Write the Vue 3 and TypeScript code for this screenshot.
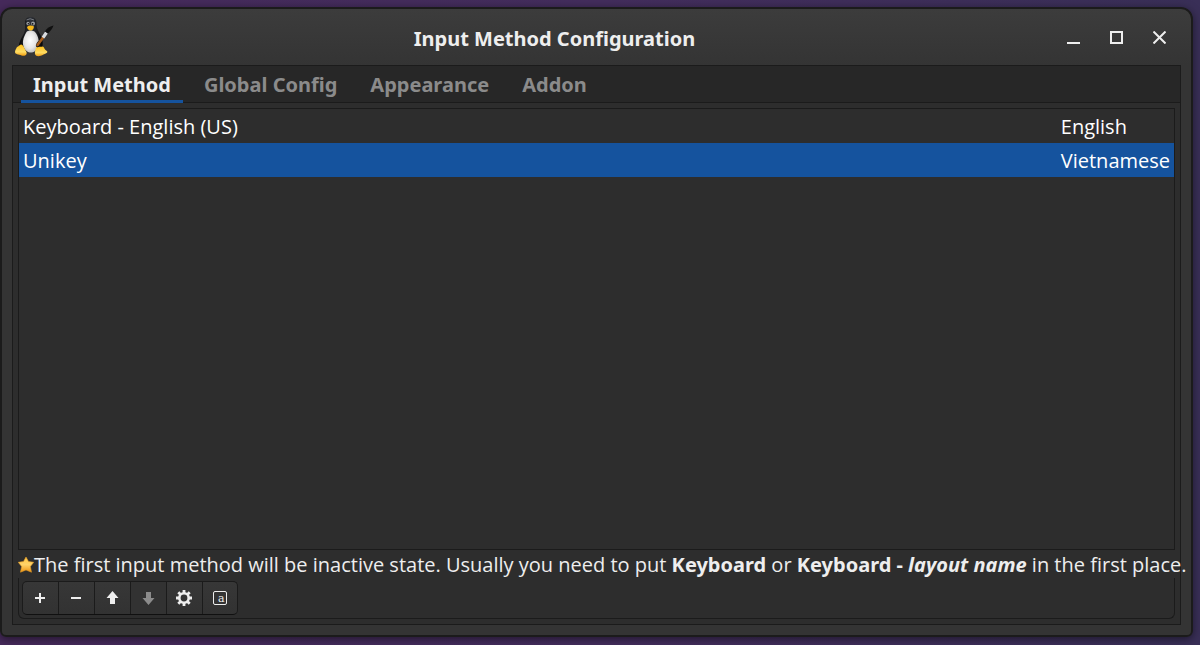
<script setup lang="ts">
import { ref } from 'vue'

interface InputMethod {
  name: string
  language: string
}

const tabs: string[] = ['Input Method', 'Global Config', 'Appearance', 'Addon']
const activeTab = ref(0)

const methods: InputMethod[] = [
  { name: 'Keyboard - English (US)', language: 'English' },
  { name: 'Unikey', language: 'Vietnamese' },
]
const selected = ref(1)
</script>

<template>
  <main class="window">
    <header class="titlebar">
      <svg class="app-icon" viewBox="-2 0 45 44" aria-hidden="true">
        <defs>
          <radialGradient id="belly" cx="45%" cy="45%" r="60%">
            <stop offset="0" stop-color="#ffffff" />
            <stop offset="0.6" stop-color="#e6e6e6" />
            <stop offset="1" stop-color="#b9b9b9" />
          </radialGradient>
          <linearGradient id="foot" x1="0" y1="0" x2="0" y2="1">
            <stop offset="0" stop-color="#ffc21c" />
            <stop offset="0.65" stop-color="#ffdc63" />
            <stop offset="1" stop-color="#ef9c10" />
          </linearGradient>
          <linearGradient id="coat" x1="0" y1="0" x2="1" y2="0">
            <stop offset="0" stop-color="#050505" />
            <stop offset="0.5" stop-color="#30333a" />
            <stop offset="1" stop-color="#050505" />
          </linearGradient>
        </defs>
        <path d="M11 8C11 4 13 2 16.500 2C20.500 2 22.500 4.500 22.500 9C22.500 14 25 17 27 21C29 25 29.500 31 27 36L18 38L7 36C3.500 33 5 28 7 24C9 20 11.500 17 11 12Z" fill="url(#coat)" />
        <path d="M12.500 17C14 15 19 15 21 17C24.500 21 25.500 26 24 31.500C22.500 37 18 38.500 14 37C10 35 8.500 30 9 26C9.500 22 11 20 12.500 17Z" fill="url(#belly)" />
        <path d="M12.500 5Q16 2.500 20 5" stroke="#777b82" stroke-width="1" fill="none" />
        <ellipse cx="14" cy="8.500" rx="1.600" ry="1.800" fill="#9c9fa3" />
        <ellipse cx="19" cy="8.500" rx="2" ry="2" fill="#9c9fa3" />
        <circle cx="14.400" cy="8.800" r=".8" fill="#151515" />
        <circle cx="18.600" cy="8.800" r=".9" fill="#151515" />
        <path d="M13 12Q16 9.500 20 11.500Q19.500 15.500 16.500 15.500Q13.500 15 13 12Z" fill="#f7b91b" />
        <path d="M3 32C4.500 32 5.500 29.500 7 29.500C9.500 30 10 33 12 36C14 40 11 41.500 7.500 40.500C4.500 39 1 39.500 1 37C1 35 2.200 34 3 32Z" fill="url(#foot)" />
        <path d="M22 33C23 31 27 32 28.500 31.500C30.500 32 30 34 31.500 35C35 37 33 38 29.500 39.500C26 41.500 22 42 21 39C20.500 37 21.500 35 22 33Z" fill="url(#foot)" />
        <ellipse cx="24.500" cy="29" rx="2" ry="3.500" fill="#121212" transform="rotate(30 24.500 29)" />
        <path d="M23.500 30L29.500 22" stroke="#a95e1c" stroke-width="2.600" stroke-linecap="round" />
        <path d="M29 22.600L32.500 17.500" stroke="#d9dce0" stroke-width="3.200" />
        <path d="M31 16.500Q33 12 39.500 10.500Q38.500 14 34 18.500Z" fill="#101010" />
      </svg>
      <h1>Input Method Configuration</h1>
      <div class="controls">
        <button type="button" aria-label="Minimize">
          <svg viewBox="0 0 13 13" shape-rendering="crispEdges"><path d="M0 11h13v2H0z" fill="#eee" /></svg>
        </button>
        <button type="button" aria-label="Maximize">
          <svg viewBox="0 0 13 13" shape-rendering="crispEdges"><path d="M1 1h11v11H1z" fill="none" stroke="#eee" stroke-width="2" /></svg>
        </button>
        <button type="button" aria-label="Close">
          <svg viewBox="0 0 13 13"><path d="M.5.5l12 12M12.500.5l-12 12" fill="none" stroke="#eee" stroke-width="2" /></svg>
        </button>
      </div>
    </header>

    <section class="notebook">
      <nav class="tabs" role="tablist">
        <button
          v-for="(tab, i) in tabs"
          :key="tab"
          type="button"
          role="tab"
          :aria-selected="i === activeTab"
          :class="{ active: i === activeTab }"
          @click="activeTab = i"
        >{{ tab }}</button>
      </nav>

      <div class="page">
        <div class="list">
          <table>
            <tbody>
              <tr
                v-for="(m, i) in methods"
                :key="m.name"
                :class="{ selected: i === selected }"
                @click="selected = i"
              >
                <td>{{ m.name }}</td>
                <td class="language">{{ m.language }}</td>
              </tr>
            </tbody>
          </table>
        </div>

        <p class="note">
          <svg class="star" viewBox="0 0 16 16" aria-hidden="true">
            <defs>
              <linearGradient id="gold" x1="0" y1="0" x2="0" y2="1">
                <stop offset="0" stop-color="#ffc640" />
                <stop offset="0.5" stop-color="#ffd36a" />
                <stop offset="1" stop-color="#ee9412" />
              </linearGradient>
            </defs>
            <path d="M8 0L10.500 4.500L15.700 5.300L12.400 9.500L13.500 15.200L8 13L2.500 15.200L3.600 9.500L.3 5.300L5.500 4.500Z" fill="url(#gold)" stroke="#e09a28" stroke-width=".6" stroke-linejoin="round" />
          </svg>
          <span>The first input method will be inactive state. Usually you need to put <b>Keyboard</b> or <b>Keyboard - <i>layout name</i></b> in the first place.</span>
        </p>

        <div class="toolbar">
          <div class="group">
            <button type="button" aria-label="Add">
              <svg viewBox="0 0 16 16" shape-rendering="crispEdges"><path d="M7 3h2v4h4v2H9v4H7V9H3V7h4z" fill="#eee" /></svg>
            </button>
            <button type="button" aria-label="Remove">
              <svg viewBox="0 0 16 16" shape-rendering="crispEdges"><path d="M3 7h10v2H3z" fill="#eee" /></svg>
            </button>
            <button type="button" aria-label="Move up">
              <svg viewBox="0 0 16 16"><path d="M8.500 1l6 7H11v6H6V8H2.500z" fill="#eee" /></svg>
            </button>
            <button type="button" aria-label="Move down" disabled>
              <svg viewBox="0 0 16 16"><path d="M8.500 15l6-7H11V2H6v6H2.500z" fill="#8b8b8b" /></svg>
            </button>
            <button type="button" aria-label="Configure">
              <svg viewBox="0 0 16 16">
                <circle cx="8" cy="8" r="4.700" fill="none" stroke="#eee" stroke-width="2.600" />
                <path d="M8 0v3M8 13v3M0 8h3M13 8h3M2.300 2.300l2.200 2.200M11.500 11.500l2.200 2.200M13.700 2.300l-2.200 2.200M4.500 11.500l-2.200 2.200" stroke="#eee" stroke-width="2.800" />
              </svg>
            </button>
            <button type="button" aria-label="Default keyboard layout">
              <span class="layout-icon">a</span>
            </button>
          </div>
        </div>
      </div>
    </section>
  </main>
</template>

<style>
body {
  margin: 0;
  background: linear-gradient(90deg, #462a5b 0%, #432d5c 50%, #392f57 100%);
}
</style>

<style scoped>
.window {
  box-sizing: border-box;
  display: flex;
  flex-direction: column;
  min-height: calc(100vh - 15px);
  margin: 7px 7px 8px 0;
  padding: 0 10px 10px;
  border: 2px solid #1b1b1b;
  border-radius: 12px 12px 6px 6px;
  background: linear-gradient(#3c3c3c, #343434 56px);
  box-shadow: 0 2px 8px rgba(0, 0, 0, 0.5);
  color: #eee;
  font: 20px/28px "Noto Sans", sans-serif;
}

button {
  margin: 0;
  padding: 0;
  border: 0;
  background: none;
  color: inherit;
  font: inherit;
}

.titlebar {
  display: flex;
  align-items: center;
  height: 56px;
}

.app-icon {
  width: 45px;
  height: 44px;
}

h1 {
  flex: 1;
  margin: 0;
  padding-top: 4px;
  font-size: 20px;
  line-height: 28px;
  text-align: center;
}

.controls {
  display: flex;
}

.controls button {
  display: flex;
  align-items: center;
  justify-content: center;
  width: 43px;
  height: 40px;
}

.controls svg {
  width: 13px;
  height: 13px;
}

.notebook {
  flex: 1;
  display: flex;
  flex-direction: column;
  border: 1px solid #1b1b1b;
  background: #2d2d2d;
}

.tabs {
  display: flex;
  gap: 9px;
  padding: 0 8px;
  border-bottom: 1px solid #1b1b1b;
  background: #272727;
}

.tabs button {
  height: 37px;
  margin-bottom: -1px;
  padding: 4px 12px 0;
  border-bottom: 3px solid transparent;
  color: #8b8b8b;
  font-weight: bold;
}

.tabs .active {
  border-color: #15539e;
  color: #eee;
}

.page {
  flex: 1;
  display: flex;
  flex-direction: column;
  padding: 5px;
}

.list {
  flex: 1;
  border: 1px solid #1b1b1b;
}

table {
  width: 100%;
  border-collapse: collapse;
}

td {
  box-sizing: border-box;
  height: 34px;
  padding: 2px 4px 0;
  color: #fff;
  font-family: "Open Sans", "Noto Sans", sans-serif;
  white-space: nowrap;
}

.language {
  width: 1px;
}

.selected {
  background: #15539e;
}

.note {
  display: flex;
  align-items: center;
  margin: 0 0 -2px;
  font-family: "Open Sans", "Noto Sans", sans-serif;
  line-height: 30px;
  white-space: nowrap;
}

.note b {
  font-family: "Noto Sans", sans-serif;
}

.star {
  flex: none;
  width: 16px;
  height: 16px;
}

.toolbar {
  padding: 3px;
  border: 1px solid #1b1b1b;
  border-top: 0;
  border-radius: 0 0 6px 6px;
}

.group {
  display: inline-flex;
  vertical-align: top;
  border: 1px solid #1b1b1b;
  border-bottom-color: #101010;
  border-radius: 5px;
  background: linear-gradient(#373737, #323232);
}

.group button {
  box-sizing: border-box;
  display: flex;
  align-items: center;
  justify-content: center;
  width: 35px;
  height: 32px;
  padding-right: 1px;
}

.group button + button {
  width: 36px;
  border-left: 1px solid #1b1b1b;
}

.group button:last-child {
  width: 35px;
}

.group button:disabled {
  background: #323232;
}

.group svg {
  width: 16px;
  height: 16px;
}

.layout-icon {
  box-sizing: border-box;
  width: 14px;
  height: 14px;
  padding-right: 1px;
  border: 1px solid #eee;
  border-radius: 2px;
  font: 11px/13px "DejaVu Serif", serif;
  text-align: right;
}
</style>
